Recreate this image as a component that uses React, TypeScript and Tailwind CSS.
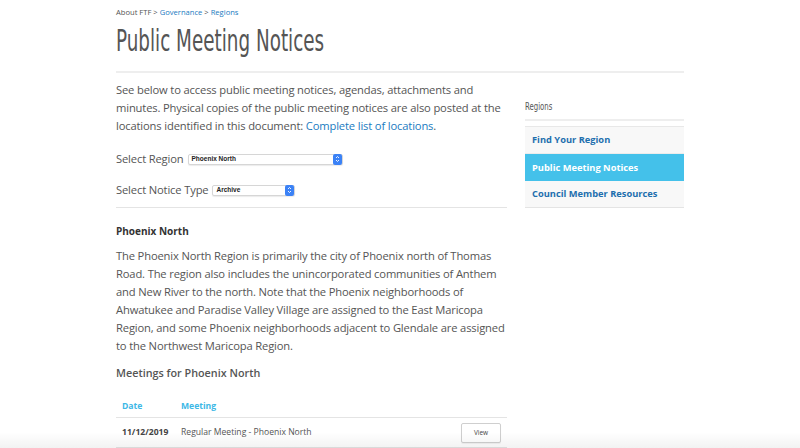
import React from "react";

const cond = { fontFamily: '"DejaVu Sans Condensed","DejaVu Sans",sans-serif', fontStretch: "condensed" as const };

function SelectBox({ value, width }: { value: string; width: string }) {
  return (
    <div className={`flex items-center justify-between h-[11px] rounded-[2px] border border-[#d6d6d6] bg-white shadow-[0_1px_1px_rgba(0,0,0,0.08)] pl-[3px] ${width}`}>
      <span className="text-[6.5px] font-bold text-[#222] leading-none" style={{ fontFamily: '"Liberation Sans",Arial,sans-serif' }}>{value}</span>
      <span className="flex h-[11px] w-[9px] flex-col items-center justify-center rounded-[2px] bg-[#3b82f6]">
        <svg width="5" height="8" viewBox="0 0 5 8">
          <path d="M1 3 L2.5 1.5 L4 3 M1 5 L2.5 6.5 L4 5" stroke="white" strokeWidth="0.9" fill="none" />
        </svg>
      </span>
    </div>
  );
}

export default function App() {
  return (
    <div className="relative h-[448px] w-[800px] overflow-hidden bg-white text-[#555]" style={{ fontFamily: '"Open Sans","Noto Sans",sans-serif' }}>
      <div className="mx-auto w-[568px] pt-[7px]">
        <div className="text-[7.6px] leading-[10px] text-[#555]">
          About FTF &gt; <span className="text-[#1a7bbf]">Governance</span> &gt; <span className="text-[#1a7bbf]">Regions</span>
        </div>
        <h1 className="mt-[6px] h-[34px] text-[30px] leading-[34px] text-[#555]">
          <span className="inline-block origin-left scale-x-[0.68] whitespace-nowrap" style={cond}>Public Meeting Notices</span>
        </h1>
        <div className="mt-[14px] h-[2px] bg-[#eeeeee]" />
        <div className="flex gap-[18px]">
          <div className="w-[391px]">
            <p className="mt-[8px] text-[11.2px] leading-[18px] tracking-[-0.15px]">
              See below to access public meeting notices, agendas, attachments and minutes. Physical copies of the public meeting notices are also posted at the locations identified in this document: <span className="text-[#1a7bbf]">Complete list of locations</span>.
            </p>
            <div className="mt-[15px] flex items-center gap-[4px]">
              <span className="text-[11.2px] leading-[18px] tracking-[-0.15px]">Select Region</span>
              <SelectBox value="Phoenix North" width="w-[155px]" />
            </div>
            <div className="mt-[13px] flex items-center gap-[4px]">
              <span className="text-[11.2px] leading-[18px] tracking-[-0.15px]">Select Notice Type</span>
              <SelectBox value="Archive" width="w-[83px]" />
            </div>
            <div className="mt-[8px] h-[1px] bg-[#e4e4e4]" />
            <h3 className="mt-[16px] text-[10px] font-bold leading-[14px] text-[#333]">Phoenix North</h3>
            <p className="mt-[9px] text-[11.2px] leading-[18px] tracking-[-0.15px]">
              The Phoenix North Region is primarily the city of Phoenix north of Thomas Road. The region also includes the unincorporated communities of Anthem and New River to the north. Note that the Phoenix neighborhoods of Ahwatukee and Paradise Valley Village are assigned to the East Maricopa Region, and some Phoenix neighborhoods adjacent to Glendale are assigned to the Northwest Maricopa Region.
            </p>
            <h3 className="mt-[10px] text-[10.8px] font-semibold leading-[16px]">Meetings for Phoenix North</h3>
            <div className="mt-[15px] flex h-[22px] items-center border-b border-[#e4e4e4] text-[8.6px] font-bold text-[#3db8e6]">
              <span className="w-[65px] pl-[6px]">Date</span>
              <span>Meeting</span>
            </div>
            <div className="flex h-[30px] items-center border-b border-[#e4e4e4] text-[8.6px]">
              <span className="w-[65px] pl-[6px] font-bold text-[#444]">11/12/2019</span>
              <span className="flex-1">Regular Meeting - Phoenix North</span>
              <span className="mr-[6px] flex h-[20px] w-[40px] items-center justify-center rounded-[2px] border border-[#cfcfcf] bg-white text-[6.5px] text-[#444] shadow-[0_1px_1px_rgba(0,0,0,0.06)]">View</span>
            </div>
          </div>
          <div className="w-[159px] pt-[26px]">
            <div className="h-[14px] text-[11px] leading-[14px] text-[#555]">
              <span className="inline-block origin-left scale-x-[0.7] whitespace-nowrap" style={cond}>Regions</span>
            </div>
            <div className="mt-[6px] h-[2px] bg-[#eeeeee]" />
            <div className="mt-[5px] border-t border-[#e8e8e8] bg-[#f8f8f8] text-[9.3px] font-bold">
              <div className="flex h-[27px] items-center border-b border-[#ececec] pl-[7px] text-[#1e6fae]">Find Your Region</div>
              <div className="flex h-[27px] items-center bg-[#44c1ea] pl-[7px] text-white">Public Meeting Notices</div>
              <div className="flex h-[27px] items-center border-b border-[#e4e4e4] pl-[7px] text-[#1e6fae]">Council Member Resources</div>
            </div>
          </div>
        </div>
      </div>
      <div className="pointer-events-none absolute bottom-0 left-0 h-[16px] w-[800px] bg-gradient-to-b from-transparent to-[rgba(0,0,0,0.05)]" />
    </div>
  );
}
